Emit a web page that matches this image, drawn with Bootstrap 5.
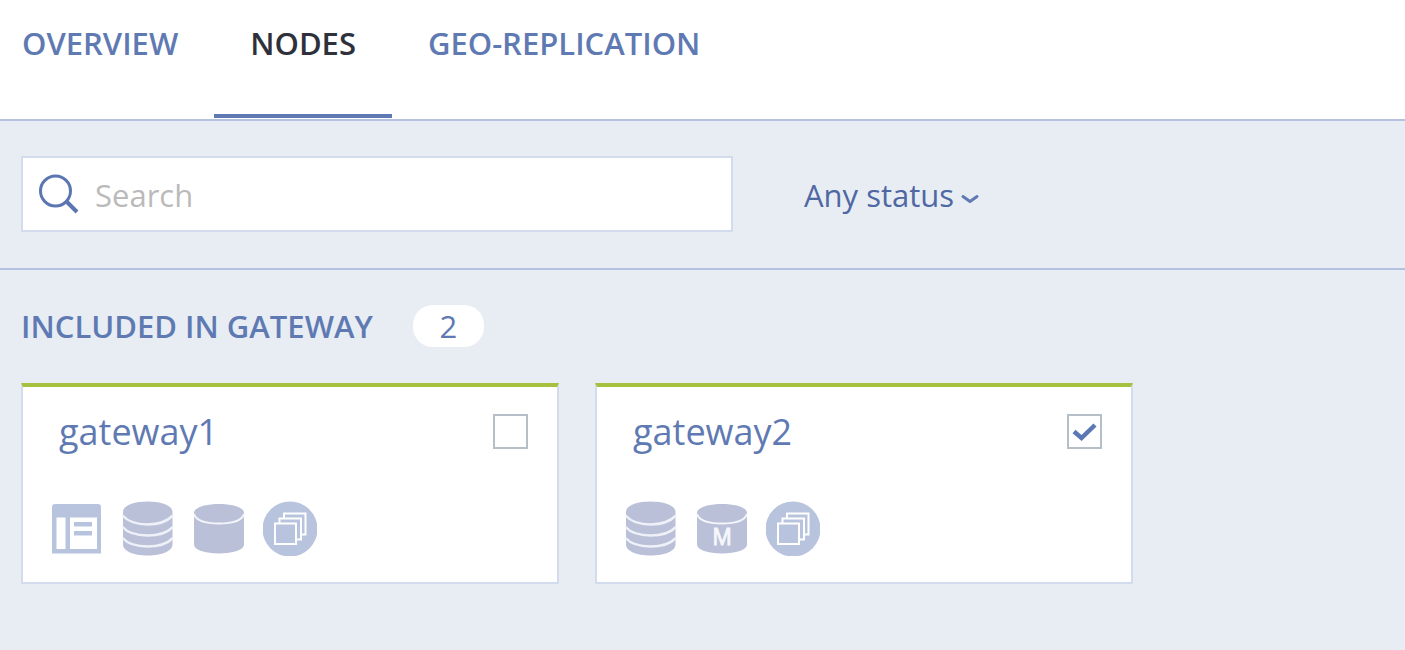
<!DOCTYPE html>
<html lang="en">
<head>
<meta charset="utf-8">
<meta name="viewport" content="width=device-width, initial-scale=1">
<title>Gateway nodes</title>
<link href="https://cdn.jsdelivr.net/npm/bootstrap@5.3.0/dist/css/bootstrap.min.css" rel="stylesheet">
<style>
  :root { --gw-blue: #5f7ab3; --gw-line: #b5c1de; --gw-pale: #d3dcec; --gw-gutter: 21px; --gw-gap: 36px; }
  body { font-family: "Open Sans", sans-serif; font-size: 31px; line-height: 42px; color: var(--gw-blue); background: #e8edf4; }
  .gw-tabs { padding: 0 22px; border-bottom: 2px solid var(--gw-line); }
  .gw-tabs .nav-link { padding: 22px var(--gw-gap) 50px; margin-bottom: 1px; border-bottom: 4px solid transparent; color: var(--gw-blue); font-weight: 600; }
  .gw-tabs .nav-item:first-child .nav-link { padding-left: 0; }
  .gw-tabs .nav-link.active { color: #2e313b; border-color: var(--gw-blue); }
  .gw-filters { padding: 35px var(--gw-gutter) 36px; gap: 71px; border-bottom: 2px solid var(--gw-line); }
  .gw-search { flex: 0 1 712px; min-width: 0; height: 76px; border: 2px solid var(--gw-pale); padding: 0 16px; gap: 16px; }
  .gw-search .form-control { font-size: 31px; line-height: 42px; padding: 2px 0 0; color: var(--gw-blue); }
  .gw-search .form-control::placeholder { color: #bababa; }
  .gw-status { width: auto; font-size: 31px; line-height: 42px; padding: 2px 24px 0 0; color: #4f67a3; background: url("data:image/svg+xml,%3Csvg xmlns='http://www.w3.org/2000/svg' viewBox='0 0 18 10'%3E%3Cpath d='M2 2.500 9 7.500 16 2.500' fill='none' stroke='%235f7ab3' stroke-width='3' stroke-linecap='round' stroke-linejoin='round'/%3E%3C/svg%3E") no-repeat right 22px / 18px 10px; }
  .gw-nodes { padding: 35px var(--gw-gutter); }
  .gw-heading { font-size: 31px; line-height: 42px; font-weight: 600; }
  .gw-count { min-width: 71px; font-size: 31px; line-height: 42px; border-radius: 20px; }
  .gw-title { gap: 40px; }
  .gw-cards { gap: var(--gw-gap); margin-top: var(--gw-gap); }
  .gw-card { flex: 0 1 538px; border: 2px solid var(--gw-pale); border-top: 4px solid #a6c03f; padding: 22px 29px 26px 27px; }
  .gw-card label { font-size: 36px; line-height: 46px; padding-left: 9px; }
  .gw-card .form-check-input { width: 35px; height: 35px; margin: 5px 0 0; border: 2px solid #b5bfca; border-radius: 0; background-color: #fff; }
  .gw-card .form-check-input:checked { background: #fff url("data:image/svg+xml,%3Csvg xmlns='http://www.w3.org/2000/svg' viewBox='0 0 31 31'%3E%3Cpath d='M5 15.500 12.500 22 26 9' fill='none' stroke='%235b77b4' stroke-width='4.500'/%3E%3C/svg%3E") center / 31px 31px; }
  .gw-icons { margin-top: 45px; gap: 17px; }
  .gw-icons svg { width: 54px; height: 56px; }
</style>
</head>
<body>
<svg class="d-none" aria-hidden="true">
  <symbol id="window" viewBox="0 0 54 56">
    <path fill="#b8c3dd" d="M2 53.500V7q0-3 3-3h43q3 0 3 3v46.500z"/>
    <path fill="#fff" d="M6.500 17.500h9v31.500h-9zm13.500 0h27v31.500H20z"/>
    <path fill="#b8c3dd" d="M24 22H42v4.500H24zm0 9H42v4.500H24z"/>
  </symbol>
  <symbol id="stack" viewBox="0 0 54 56">
    <path fill="#bac0d8" d="M2 12C2 5.500 12.500 1.500 26.500 1.500S51.500 5.500 51.500 12v32.500C51.500 51 40.500 55.500 26.500 55.500S2 51 2 44.500z"/>
    <path fill="none" stroke="#eef1f7" stroke-width="2.500" d="M1.500 15.500C6.500 21 15.500 24.500 26.500 24.500S46.500 21 52 15.500M1.500 27C6.500 32.500 15.500 35.500 26.500 35.500S46.500 32.500 52 27M1.500 38C6.500 43.500 15.500 46.500 26.500 46.500S46.500 43.500 52 38"/>
  </symbol>
  <symbol id="drum" viewBox="0 0 54 56">
    <path fill="#bac0d8" d="M2 13C2 7.500 13 4 27 4s25 3.500 25 9v31.500C52 50 41 53.500 27 53.500S2 50 2 44.500z"/>
    <path fill="none" stroke="#f3f5fa" stroke-width="2" d="M2 14C4 20.500 14 23.500 27 23.500S50 20.500 52 14"/>
  </symbol>
  <symbol id="copies" viewBox="0 0 54 56">
    <circle cx="27" cy="29" r="27.500" fill="#b8c3dd"/>
    <path fill="none" stroke="#fff" stroke-width="2" d="M12 23.500h21v20.500H12zM16.500 23v-4.500H38V39.500h-4.500M21 18v-4.500H42.500V34.500h-4.500"/>
  </symbol>
</svg>

<ul class="nav gw-tabs bg-white">
  <li class="nav-item"><a class="nav-link" href="#overview">OVERVIEW</a></li>
  <li class="nav-item"><a class="nav-link active" aria-current="page" href="#nodes">NODES</a></li>
  <li class="nav-item"><a class="nav-link" href="#geo">GEO-REPLICATION</a></li>
</ul>

<form class="gw-filters d-flex align-items-center">
  <div class="gw-search d-flex align-items-center bg-white">
    <label class="d-flex flex-shrink-0" for="search" aria-label="Search">
      <svg width="40" height="40" viewBox="0 0 40 40" fill="none" stroke="#5b76b1" aria-hidden="true">
        <circle cx="16.500" cy="17" r="15" stroke-width="3"/><path d="M27.500 27.500 38 38" stroke-width="4"/>
      </svg>
    </label>
    <input class="form-control border-0 shadow-none rounded-0 bg-transparent" type="text" id="search" placeholder="Search">
  </div>
  <select class="form-select gw-status border-0 shadow-none rounded-0" id="status" aria-label="Status"><option>Any status</option></select>
</form>

<main class="gw-nodes">
  <div class="gw-title d-flex align-items-center">
    <h2 class="gw-heading mb-0">INCLUDED IN GATEWAY</h2>
    <span class="gw-count bg-white text-center">2</span>
  </div>
  <div class="gw-cards d-flex">
    <section class="gw-card bg-white">
      <div class="d-flex justify-content-between align-items-start">
        <label for="gateway1">gateway1</label>
        <input class="form-check-input" type="checkbox" id="gateway1">
      </div>
      <div class="gw-icons d-flex">
        <svg><use href="#window"/></svg>
        <svg><use href="#stack"/></svg>
        <svg><use href="#drum"/></svg>
        <svg><use href="#copies"/></svg>
      </div>
    </section>
    <section class="gw-card bg-white">
      <div class="d-flex justify-content-between align-items-start">
        <label for="gateway2">gateway2</label>
        <input class="form-check-input" type="checkbox" id="gateway2" checked>
      </div>
      <div class="gw-icons d-flex">
        <svg><use href="#stack"/></svg>
        <svg viewBox="0 0 54 56"><use href="#drum"/><text x="27" y="45" text-anchor="middle" font-family="Liberation Sans, sans-serif" font-size="23" fill="#f6f7fb" stroke="#f6f7fb" stroke-width=".8">M</text></svg>
        <svg><use href="#copies"/></svg>
      </div>
    </section>
  </div>
</main>
<script src="https://cdn.jsdelivr.net/npm/bootstrap@5.3.0/dist/js/bootstrap.bundle.min.js"></script>
</body>
</html>
